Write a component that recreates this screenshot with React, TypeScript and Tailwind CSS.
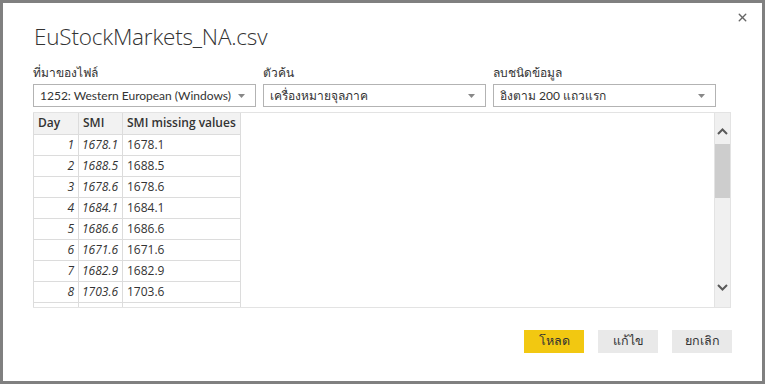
import { X } from "lucide-react";

const rows = [
  ["1", "1678.1", "1678.1"],
  ["2", "1688.5", "1688.5"],
  ["3", "1678.6", "1678.6"],
  ["4", "1684.1", "1684.1"],
  ["5", "1686.6", "1686.6"],
  ["6", "1671.6", "1671.6"],
  ["7", "1682.9", "1682.9"],
  ["8", "1703.6", "1703.6"],
];

function Select({ label, value }: { label: string; value: string }) {
  return (
    <div className="flex w-[223px] flex-col">
      <p className="h-[16px] text-[12px] leading-[16px] text-[#333]">{label}</p>
      <div className="mt-[3px] flex h-[23px] items-center justify-between border border-[#b3b3b3] bg-white pl-[6px] pr-[10px]">
        <span className="whitespace-nowrap font-['Lato',sans-serif] text-[12px] text-[#333]">{value}</span>
        <svg width="7" height="4" viewBox="0 0 7 4" className="shrink-0 text-[#888]">
          <path d="M0 0h7L3.5 4z" fill="currentColor" />
        </svg>
      </div>
    </div>
  );
}

function Chevron({ up }: { up?: boolean }) {
  return (
    <svg width="11" height="7" viewBox="0 0 11 7" className="text-[#5a5a5a]">
      <path
        d={up ? "M1 6L5.5 1.5L10 6" : "M1 1L5.5 5.5L10 1"}
        fill="none"
        stroke="currentColor"
        strokeWidth="2"
      />
    </svg>
  );
}

export default function App() {
  return (
    <div
      className="flex h-[384px] w-[765px] flex-col border-[3px] border-[#808080] bg-white"
      style={{ fontFamily: '"Open Sans", "Noto Sans", sans-serif' }}
    >
      <div className="flex justify-end pr-[13px] pt-[8px]">
        <X size={13} strokeWidth={2.6} className="text-[#666]" />
      </div>

      <h1 className="ml-[31px] mt-[-2px] h-[30px] text-[22.5px] font-light leading-[30px] tracking-[-0.2px] text-[#333]">
        EuStockMarkets_NA.csv
      </h1>

      <div className="ml-[30px] mt-[13px] flex gap-[7px]">
        <Select label="ที่มาของไฟล์" value="1252: Western European (Windows)" />
        <Select label="ตัวค้น" value="เครื่องหมายจุลภาค" />
        <Select label="ลบชนิดข้อมูล" value="อิงตาม 200 แถวแรก" />
      </div>

      <div className="ml-[30px] mt-[5px] flex h-[196px] w-[698px] border-y border-[#e3e3e3]">
        <div className="flex-1 overflow-hidden">
          <table className="border-collapse text-[12px] text-[#333]">
            <thead>
              <tr className="h-[21px] bg-[#f2f2f2]">
                <th className="w-[45px] border-x border-b border-[#dcdcdc] pl-[4px] text-left font-semibold">Day</th>
                <th className="w-[44px] border-x border-b border-[#dcdcdc] pl-[4px] text-left font-semibold">SMI</th>
                <th className="w-[118px] border-x border-b border-[#dcdcdc] pl-[4px] text-left font-semibold">SMI missing values</th>
              </tr>
            </thead>
            <tbody>
              {rows.map((r) => (
                <tr key={r[0]} className="h-[21px]">
                  <td className="border border-[#dcdcdc] pr-[4px] text-right italic">{r[0]}</td>
                  <td className="border border-[#dcdcdc] pr-[4px] text-right italic">{r[1]}</td>
                  <td className="border border-[#dcdcdc] pl-[4px]">{r[2]}</td>
                </tr>
              ))}
              <tr className="h-[21px]">
                <td className="border border-[#dcdcdc]" />
                <td className="border border-[#dcdcdc]" />
                <td className="border border-[#dcdcdc]" />
              </tr>
            </tbody>
          </table>
        </div>
        <div className="flex w-[17px] flex-col items-center border-x border-[#e3e3e3] bg-[#f0f0f0]">
          <div className="mt-[15px]">
            <Chevron up />
          </div>
          <div className="mt-[9px] h-[54px] w-[15px] bg-[#cdcdcd]" />
          <div className="flex-1" />
          <div className="mb-[16px]">
            <Chevron />
          </div>
        </div>
      </div>

      <div className="mr-[30px] mt-[22px] flex justify-end gap-[14px] text-[12.5px] text-[#333]">
        <button className="h-[23px] w-[60px] bg-[#f2c811]">โหลด</button>
        <button className="h-[23px] w-[60px] bg-[#e9e9e9]">แก้ไข</button>
        <button className="h-[23px] w-[60px] bg-[#e9e9e9]">ยกเลิก</button>
      </div>
    </div>
  );
}
